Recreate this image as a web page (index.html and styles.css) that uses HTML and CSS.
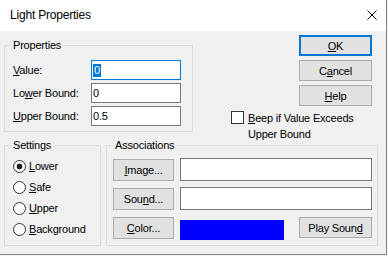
FILE: index.html
```html
<!DOCTYPE html>
<html lang="en">
  <head>
    <meta charset="UTF-8" />
    <title>Light Properties</title>
    <link rel="stylesheet" href="styles.css">
  </head>
  <body>
    <div class="window">
      <div class="titlebar">
        <span class="title">Light Properties</span>
        <svg class="close" width="10" height="10" viewBox="0 0 10 10">
          <path d="M0.5 0.5L9.5 9.5M9.5 0.5L0.5 9.5" stroke="#000" stroke-width="1" fill="none" />
        </svg>
      </div>

      <div class="client">
        <div class="top-row">
          <fieldset class="group props">
            <legend>Properties</legend>
            <div class="rows">
              <div class="row">
                <label><u>V</u>alue:</label>
                <div class="edit focus"><span class="sel">0</span></div>
              </div>
              <div class="row">
                <label>Lo<u>w</u>er Bound:</label>
                <div class="edit">0</div>
              </div>
              <div class="row">
                <label><u>U</u>pper Bound:</label>
                <div class="edit">0.5</div>
              </div>
            </div>
          </fieldset>

          <div class="side">
            <div class="buttons">
              <button class="btn dlg-btn default"><u>O</u>K</button>
              <button class="btn dlg-btn">C<u>a</u>ncel</button>
              <button class="btn dlg-btn"><u>H</u>elp</button>
            </div>
            <div class="check-row">
              <span class="checkbox"></span>
              <span class="check-label"><u>B</u>eep if Value Exceeds Upper Bound</span>
            </div>
          </div>
        </div>

        <div class="bottom-row">
          <fieldset class="group settings">
            <legend>Settings</legend>
            <div class="radios">
              <div class="radio-row"><span class="radio on"></span><span><u>L</u>ower</span></div>
              <div class="radio-row"><span class="radio"></span><span><u>S</u>afe</span></div>
              <div class="radio-row"><span class="radio"></span><span><u>U</u>pper</span></div>
              <div class="radio-row"><span class="radio"></span><span><u>B</u>ackground</span></div>
            </div>
          </fieldset>

          <fieldset class="group assoc">
            <legend>Associations</legend>
            <div class="assoc-grid">
              <button class="btn assoc-btn"><u>I</u>mage...</button>
              <div class="edit"></div>
              <button class="btn assoc-btn">Sou<u>n</u>d...</button>
              <div class="edit"></div>
              <button class="btn assoc-btn"><u>C</u>olor...</button>
              <div class="color-row">
                <div class="swatch"></div>
                <button class="btn dlg-btn play">Play Soun<u>d</u></button>
              </div>
            </div>
          </fieldset>
        </div>
      </div>
    </div>
  </body>
</html>
```

FILE: styles.css
```css
* {
  margin: 0;
  padding: 0;
  box-sizing: border-box;
}

body {
  font-family: "Liberation Sans", Arial, sans-serif;
  font-size: 11px;
  letter-spacing: -0.2px;
  background: #f0f0f0;
  color: #000;
}

.window {
  width: 387px;
  height: 255px;
  background: #f0f0f0;
  border-right: 1px solid #858585;
  border-bottom: 1px solid #858585;
}

.titlebar {
  height: 31px;
  background: #fff;
  display: flex;
  justify-content: space-between;
  align-items: flex-start;
  padding: 0 9px 0 10px;
}

.title {
  font-size: 12px;
  line-height: 31px;
}

.close {
  margin-top: 10px;
}

.client {
  padding: 4px 8px 0 4px;
}

/* group boxes */
.group {
  border: 1px solid #dcdcdc;
  min-width: 0;
}

.group legend {
  margin-left: 6px;
  padding: 0 2px;
  line-height: 15px;
}

.top-row {
  display: flex;
  height: 97px;
}

.props {
  width: 189px;
  height: 94px;
  margin-top: 3px;
  flex-shrink: 0;
}

.rows {
  display: flex;
  flex-direction: column;
  gap: 3px;
  padding: 7px 0 0 8px;
}

.row {
  display: flex;
  align-items: center;
  height: 20px;
}

.row label {
  width: 78px;
}

.edit {
  background: #fff;
  border: 1px solid #7a7a7a;
}

.props .edit {
  width: 90px;
  height: 20px;
  padding-left: 1px;
  line-height: 18px;
}

.edit.focus {
  border-color: #0078d7;
}

.sel {
  display: inline-block;
  background: #0078d7;
  color: #fff;
  padding: 0 1px;
  line-height: 13px;
}

/* right column */
.side {
  flex: 1;
  display: flex;
  flex-direction: column;
}

.buttons {
  align-self: flex-end;
  display: flex;
  flex-direction: column;
  gap: 4px;
  margin-right: 6px;
}

.btn {
  font: inherit;
  letter-spacing: inherit;
  color: #000;
  background: #e1e1e1;
  border: 1px solid #adadad;
}

.dlg-btn {
  width: 73px;
  height: 21px;
}

.btn.default {
  border: 2px solid #0078d7;
}

.check-row {
  display: flex;
  gap: 4px;
  margin: 4px 0 0 38px;
}

.checkbox {
  width: 13px;
  height: 13px;
  margin-top: 1px;
  background: #fff;
  border: 1px solid #333;
  flex-shrink: 0;
}

.check-label {
  width: 120px;
  line-height: 16px;
}

/* lower part */
.bottom-row {
  display: flex;
  gap: 5px;
  margin-top: 6px;
  height: 108px;
}

.settings {
  width: 97px;
  flex-shrink: 0;
}

.radios {
  padding: 3px 0 0 8px;
}

.radio-row {
  display: flex;
  align-items: center;
  gap: 3px;
  height: 21px;
  line-height: 13px;
}

.radio {
  width: 13px;
  height: 13px;
  border: 1px solid #333;
  border-radius: 50%;
  background: #fff;
}

.radio.on {
  background: radial-gradient(circle, #1a1a1a 0 2.6px, #fff 3.2px);
}

.assoc {
  width: 272px;
  flex-shrink: 0;
}

.assoc-grid {
  display: grid;
  grid-template-columns: 61px 192px;
  grid-template-rows: 23px 23px 24px;
  gap: 6px;
  padding: 5px 0 0 6px;
}

.assoc-btn {
  width: 61px;
  height: 22px;
  margin-top: 1px;
}

.color-row {
  display: flex;
  justify-content: space-between;
  align-items: flex-start;
}

.swatch {
  width: 104px;
  height: 20px;
  margin-top: 4px;
  background: #0000ff;
}

.play {
  margin-top: 1px;
}
```
